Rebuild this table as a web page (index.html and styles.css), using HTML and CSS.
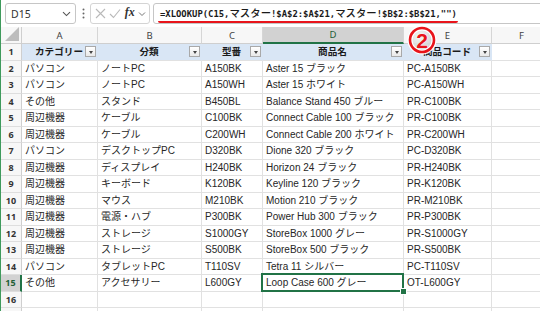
FILE: index.html
```html
<!DOCTYPE html>
<html lang="ja">
<head>
<meta charset="utf-8">
<link rel="stylesheet" href="styles.css">
</head>
<body>
<div class="app">
  <div class="fbar">
    <div class="namebox"><span class="nb-text">D15</span><svg class="chev" width="9" height="6" viewBox="0 0 9 6"><path d="M1 1.2 L4.5 4.6 L8 1.2" fill="none" stroke="#555" stroke-width="1.1"/></svg></div>
    <svg class="grip" width="3" height="11" viewBox="0 0 3 11"><circle cx="1.5" cy="1.5" r="1" fill="#666"/><circle cx="1.5" cy="5.5" r="1" fill="#666"/><circle cx="1.5" cy="9.5" r="1" fill="#666"/></svg>
    <div class="fbtns">
      <svg width="11" height="11" viewBox="0 0 11 11"><path d="M1 1 L10 10 M10 1 L1 10" stroke="#b9b9b9" stroke-width="1.1" fill="none"/></svg>
      <svg width="12" height="11" viewBox="0 0 12 11"><path d="M1 6 L4.5 9.5 L11 1.5" stroke="#b9b9b9" stroke-width="1.1" fill="none"/></svg>
      <span class="fx">fx</span>
      <svg width="8" height="6" viewBox="0 0 8 6"><path d="M1 1.5 L4 4.5 L7 1.5" fill="none" stroke="#777" stroke-width="1"/></svg>
    </div>
    <div class="finput"><span class="formula">=XLOOKUP(C15,<span class="k">マスター</span>!$A$2:$A$21,<span class="k">マスター</span>!$B$2:$B$21,"")</span></div>
  </div>

  <div class="sheet">
    <div class="corner"><svg width="14" height="14" viewBox="0 0 14 14"><path d="M14 0 L14 14 L0 14 Z" fill="#bdbdbd"/></svg></div>
    <div class="ch">A</div><div class="ch">B</div><div class="ch">C</div><div class="ch chsel">D</div><div class="ch">E</div><div class="ch">F</div>

    <div class="rh">1</div>
    <div class="c th"><span class="sp"></span><span class="tt">カテゴリー</span><span class="fb"><i></i></span></div>
    <div class="c th"><span class="sp"></span><span class="tt">分類</span><span class="fb"><i></i></span></div>
    <div class="c th"><span class="sp"></span><span class="tt">型番</span><span class="fb"><i></i></span></div>
    <div class="c th"><span class="sp"></span><span class="tt">商品名</span><span class="fb"><i></i></span></div>
    <div class="c th"><span class="sp"></span><span class="tt">商品コード</span><span class="fb"><i></i></span></div>
    <div class="c"></div>

    <div class="rh">2</div><div class="c">パソコン</div><div class="c">ノートPC</div><div class="c">A150BK</div><div class="c">Aster 15 ブラック</div><div class="c">PC-A150BK</div><div class="c"></div>
    <div class="rh">3</div><div class="c">パソコン</div><div class="c">ノートPC</div><div class="c">A150WH</div><div class="c">Aster 15 ホワイト</div><div class="c">PC-A150WH</div><div class="c"></div>
    <div class="rh">4</div><div class="c">その他</div><div class="c">スタンド</div><div class="c">B450BL</div><div class="c">Balance Stand 450 ブルー</div><div class="c">PR-C100BK</div><div class="c"></div>
    <div class="rh">5</div><div class="c">周辺機器</div><div class="c">ケーブル</div><div class="c">C100BK</div><div class="c">Connect Cable 100 ブラック</div><div class="c">PR-C100BK</div><div class="c"></div>
    <div class="rh">6</div><div class="c">周辺機器</div><div class="c">ケーブル</div><div class="c">C200WH</div><div class="c">Connect Cable 200 ホワイト</div><div class="c">PR-C200WH</div><div class="c"></div>
    <div class="rh">7</div><div class="c">パソコン</div><div class="c">デスクトップPC</div><div class="c">D320BK</div><div class="c">Dione 320 ブラック</div><div class="c">PC-D320BK</div><div class="c"></div>
    <div class="rh">8</div><div class="c">周辺機器</div><div class="c">ディスプレイ</div><div class="c">H240BK</div><div class="c">Horizon 24 ブラック</div><div class="c">PR-H240BK</div><div class="c"></div>
    <div class="rh">9</div><div class="c">周辺機器</div><div class="c">キーボード</div><div class="c">K120BK</div><div class="c">Keyline 120 ブラック</div><div class="c">PR-K120BK</div><div class="c"></div>
    <div class="rh">10</div><div class="c">周辺機器</div><div class="c">マウス</div><div class="c">M210BK</div><div class="c">Motion 210 ブラック</div><div class="c">PR-M210BK</div><div class="c"></div>
    <div class="rh">11</div><div class="c">周辺機器</div><div class="c">電源・ハブ</div><div class="c">P300BK</div><div class="c">Power Hub 300 ブラック</div><div class="c">PR-P300BK</div><div class="c"></div>
    <div class="rh">12</div><div class="c">周辺機器</div><div class="c">ストレージ</div><div class="c">S1000GY</div><div class="c">StoreBox 1000 グレー</div><div class="c">PR-S1000GY</div><div class="c"></div>
    <div class="rh">13</div><div class="c">周辺機器</div><div class="c">ストレージ</div><div class="c">S500BK</div><div class="c">StoreBox 500 ブラック</div><div class="c">PR-S500BK</div><div class="c"></div>
    <div class="rh">14</div><div class="c">パソコン</div><div class="c">タブレットPC</div><div class="c">T110SV</div><div class="c">Tetra 11 シルバー</div><div class="c">PC-T110SV</div><div class="c"></div>
    <div class="rh rhsel">15</div><div class="c">その他</div><div class="c">アクセサリー</div><div class="c">L600GY</div><div class="c sel">Loop Case 600 グレー</div><div class="c">OT-L600GY</div><div class="c"></div>
    <div class="rh">16</div><div class="c"></div><div class="c"></div><div class="c"></div><div class="c"></div><div class="c"></div><div class="c"></div>
    <div class="rh"></div><div class="c"></div><div class="c"></div><div class="c"></div><div class="c"></div><div class="c"></div><div class="c"></div>
  </div>

  <svg class="badge" width="32" height="30" viewBox="0 0 32 30">
    <defs><radialGradient id="bg" cx="0.4" cy="0.35" r="0.7"><stop offset="0" stop-color="#f4f4f4"/><stop offset="1" stop-color="#c9c9c9"/></radialGradient></defs>
    <circle cx="15" cy="14" r="12" fill="url(#bg)" fill-opacity="0.9" stroke="#fff" stroke-width="5"/>
    <circle cx="15" cy="14" r="12" fill="none" stroke="#e8141b" stroke-width="2.6"/>
    <text x="15" y="21.5" text-anchor="middle" class="badge-t">2</text>
  </svg>
</div>
</body>
</html>
```

FILE: styles.css
```css
* { box-sizing: border-box; }
html, body { margin: 0; padding: 0; background: #fff; }
body { width: 540px; height: 311px; overflow: hidden; font-family: "Noto Sans CJK JP", "Noto Sans", sans-serif; color: #222; }

.app { position: relative; width: 540px; height: 311px; overflow: hidden; border-left: 1px solid #3f9a5c; }

.fbar { height: 27px; display: flex; align-items: center; padding: 1px 0 1px 4px; background: #fff; }
.namebox { width: 71px; height: 21px; border: 1px solid #c6c6c6; border-radius: 3px; display: flex; align-items: center; justify-content: space-between; padding: 0 4px 0 5px; }
.nb-text { font-family: "Noto Sans", sans-serif; font-size: 10.5px; color: #333; }
.grip { margin: 0 5px 0 6px; }
.fbtns { width: 60px; height: 21px; border: 1px solid #d4d4d4; border-radius: 3px; display: flex; align-items: center; justify-content: space-between; padding: 0 3px 0 4px; }
.fx { font-family: "Liberation Serif", serif; font-style: italic; font-weight: bold; font-size: 12px; color: #333; margin-top: -2px; }
.finput { flex: 1; height: 21px; margin-left: 3px; margin-right: -4px; border: 1px solid #c6c6c6; border-radius: 3px; display: flex; align-items: center; padding-left: 4px; }
.formula { font-family: "DejaVu Sans Mono", "Noto Sans CJK JP", monospace; font-size: 8.9px; font-weight: bold; color: #1a1a1a; line-height: 11px; padding: 0 1px 1px 2px; border-bottom: 2px solid #e8141b; border-radius: 0 0 2px 2px; white-space: nowrap; margin-top: 2px; }
.formula .k { font-family: "Noto Sans CJK JP", sans-serif; font-size: 10.4px; font-weight: 500; }

.sheet { display: grid; grid-template-columns: 21px 76px 104px 61px 141px 88px 60px; grid-template-rows: 17px repeat(17, 16.5px); }

.corner { background: #f7f7f7; border-right: 1px solid #cfcfcf; border-bottom: 1px solid #cfcfcf; display: flex; align-items: flex-end; justify-content: flex-end; padding: 0 2px 2px 0; }
.ch { background: #f7f7f7; border-right: 1px solid #d6d6d6; border-bottom: 1px solid #cfcfcf; font-family: "Noto Sans", sans-serif; font-size: 9.5px; color: #444; display: flex; align-items: center; justify-content: center; }
.chsel { background: #d2d2d2; border-bottom: 2px solid #217346; color: #1e5e36; }
.rh { background: #f7f7f7; border-right: 1px solid #cfcfcf; border-bottom: 1px solid #dedede; font-family: "Noto Sans", sans-serif; font-weight: bold; font-size: 9px; color: #333; display: flex; align-items: center; justify-content: center; }
.rhsel { background: #d2d2d2; border-right: 2px solid #217346; color: #1e5e36; }

.c { border-right: 1px solid #e1e1e1; border-bottom: 1px solid #e1e1e1; font-family: "Liberation Sans", "Noto Sans CJK JP", sans-serif; font-size: 10px; line-height: 15px; padding-left: 3px; white-space: nowrap; overflow: hidden; display: flex; align-items: center; color: #262626; }
.th { background: #d9e6f5; font-family: "Noto Sans CJK JP", sans-serif; font-weight: bold; font-size: 9.6px; padding: 0 1px 0 0; border-right-color: #d9e6f5; }
.th .sp { width: 11px; flex: none; }
.th .tt { flex: 1; text-align: center; color: #1a1a1a; }
.fb { width: 11px; height: 11px; flex: none; border: 1px solid #a9a9a9; background: linear-gradient(#ffffff, #e9e9e9); display: flex; align-items: center; justify-content: center; }
.fb i { display: block; width: 0; height: 0; border-left: 2.5px solid transparent; border-right: 2.5px solid transparent; border-top: 3px solid #444; margin-top: 2px; }

.sel { position: relative; overflow: visible; }
.sel::after { content: ""; position: absolute; left: -2px; top: -2px; right: -1px; bottom: -1px; border: 2px solid #217346; pointer-events: none; }
.sel::before { content: ""; position: absolute; right: -4px; bottom: -4px; width: 5px; height: 5px; background: #217346; border: 1px solid #fff; z-index: 2; }

.badge { position: absolute; left: 406px; top: 26px; }
.badge-t { font-family: "Liberation Sans", sans-serif; font-weight: bold; font-size: 21px; fill: #e8141b; stroke: #fff; stroke-width: 0.6px; paint-order: stroke; }
```
